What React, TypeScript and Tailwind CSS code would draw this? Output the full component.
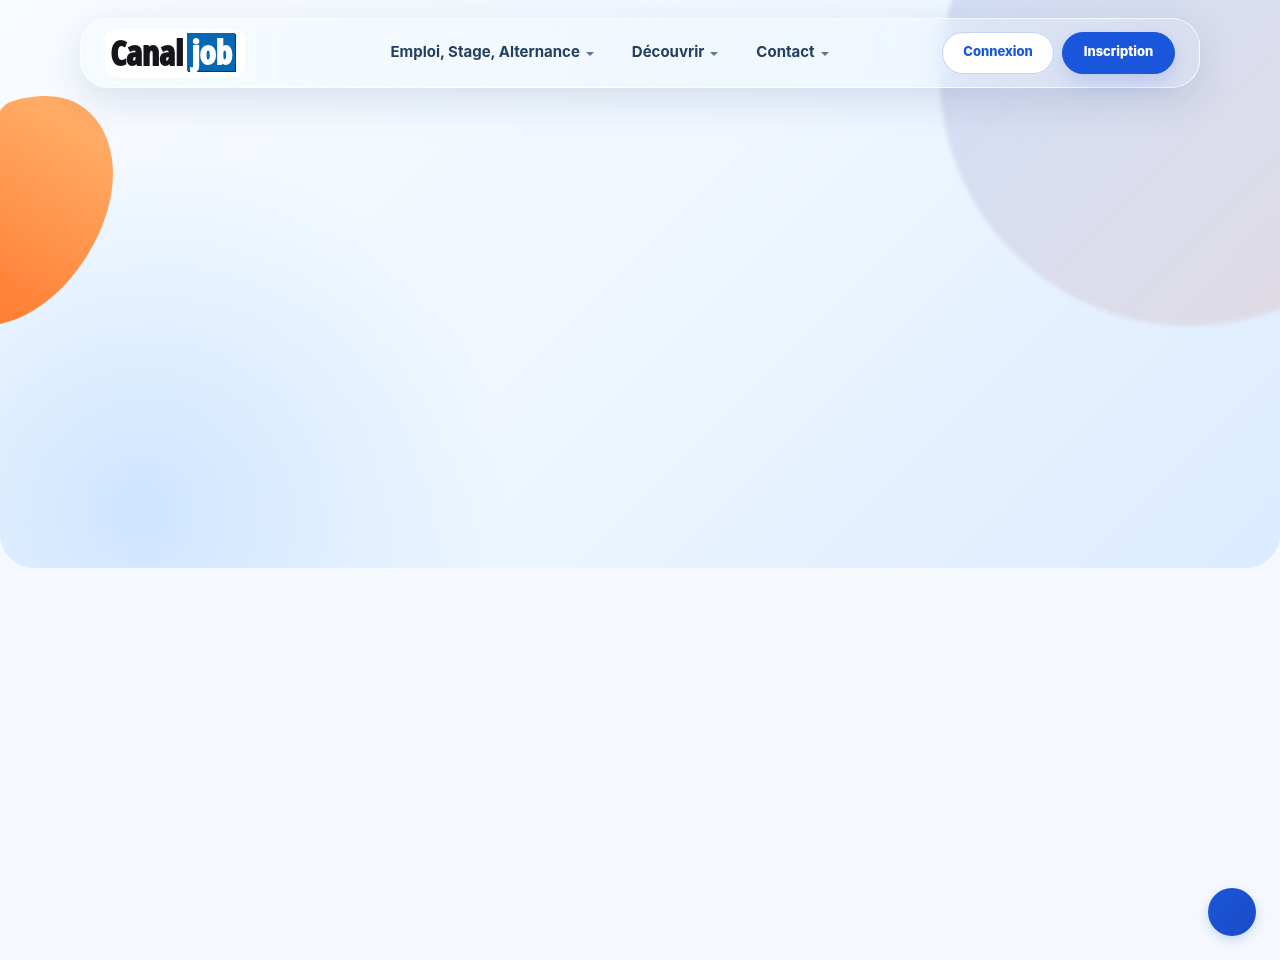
import { clsx } from "clsx";

interface NavItem {
  label: string;
  href: string;
}

const NAV_ITEMS: NavItem[] = [
  { label: "Emploi, Stage, Alternance", href: "#emploi" },
  { label: "Découvrir", href: "#decouvrir" },
  { label: "Contact", href: "#contact" },
];

function Logo() {
  return (
    <a href="#accueil" aria-label="Canaljob" className="flex h-12 w-[140px] shrink-0 items-center rounded-xl bg-white">
      <svg viewBox="0 0 140 48" className="h-12 w-[140px] overflow-visible">
        <rect x="83" y="5" width="48" height="38" fill="#12324f" />
        <rect x="82" y="4" width="48" height="38" fill="#0468b4" />
        <g
          fontFamily="'Liberation Sans Narrow', 'Open Sans Condensed', 'Liberation Sans', sans-serif"
          fontWeight="700"
          strokeWidth="1.8"
        >
          <text x="6" y="36" fontSize="34" fill="#15151b" stroke="#15151b">Canal</text>
          <text x="87" y="35" fontSize="33" fill="#fff" stroke="#fff">job</text>
        </g>
      </svg>
    </a>
  );
}

function Header() {
  return (
    <header className="relative z-10 mx-auto flex h-[70px] w-full max-w-[1120px] items-center justify-between rounded-[28px] border border-white/70 bg-linear-to-r from-[#f5fbff]/80 via-[#f0f8ff]/60 to-white/5 px-6 shadow-[0_12px_40px_rgba(15,45,100,0.13)] backdrop-blur-lg">
      <Logo />
      <nav className="flex flex-1 items-center justify-center gap-[38px] pb-0.5 pl-8">
        {NAV_ITEMS.map((item) => (
          <a
            key={item.label}
            href={item.href}
            className="flex items-center gap-1.5 text-[15px] leading-5 font-bold text-[#24405f]"
          >
            {item.label}
            <svg viewBox="0 0 8 4" className="mt-1 h-1 w-2" fill="#64748b">
              <path d="M0 0h8L4 4z" />
            </svg>
          </a>
        ))}
      </nav>
      <div className="flex items-center gap-2">
        <AuthButton label="Connexion" />
        <AuthButton label="Inscription" primary />
      </div>
    </header>
  );
}

function AuthButton({ label, primary = false }: { label: string; primary?: boolean }) {
  return (
    <button
      type="button"
      className={clsx(
        "h-[42px] rounded-full border pb-0.5 text-[13px] font-extrabold",
        primary
          ? "w-[113px] border-[#1a56db] bg-[#1a56db] text-white shadow-[0_8px_20px_rgba(26,86,219,0.18)]"
          : "w-28 border-[#1a56db]/25 bg-white text-[#1a56db]"
      )}
    >
      {label}
    </button>
  );
}

export default function App() {
  return (
    <div className="min-h-screen bg-[#f5f9fd] font-['Inter','Liberation_Sans',sans-serif]">
      <section className="relative min-h-[568px] overflow-hidden rounded-b-[34px] bg-[radial-gradient(circle_at_140px_510px,#cee5ff_0%,rgba(206,229,255,0)_370px),linear-gradient(135deg,#f9fcff_0%,#f0f7ff_48%,#dbebff_100%)] px-20 pt-[18px]">
        {/* Background shapes */}
        <div className="absolute -top-[174px] -right-40 size-[500px] rounded-full bg-linear-135 from-[#1a56db] to-[#ff7f32] opacity-[0.17] blur-[2px]" />
        <svg viewBox="0 0 114 230" className="absolute top-[95px] left-0 h-[230px] w-[114px]">
          <defs>
            <linearGradient id="blob" x1="0.6" y1="0" x2="0.3" y2="1">
              <stop offset="0.1" stopColor="#ffab65" />
              <stop offset="1" stopColor="#ff8136" />
            </linearGradient>
          </defs>
          <path d="M0 16C2 13 4 10 8 8C20 3 33 1 46 1C87 1 113 34 113 79C113 139 62 216 0 229Z" fill="url(#blob)" />
        </svg>
        <Header />
      </section>

      {/* Floating action */}
      <button
        type="button"
        aria-label="Ouvrir l'assistant"
        className="fixed right-6 bottom-6 z-20 size-12 rounded-full bg-linear-135 from-[#1a56db] to-[#1a4bc4] shadow-[0_4px_12px_rgba(26,86,219,0.2)]"
      />
    </div>
  );
}
